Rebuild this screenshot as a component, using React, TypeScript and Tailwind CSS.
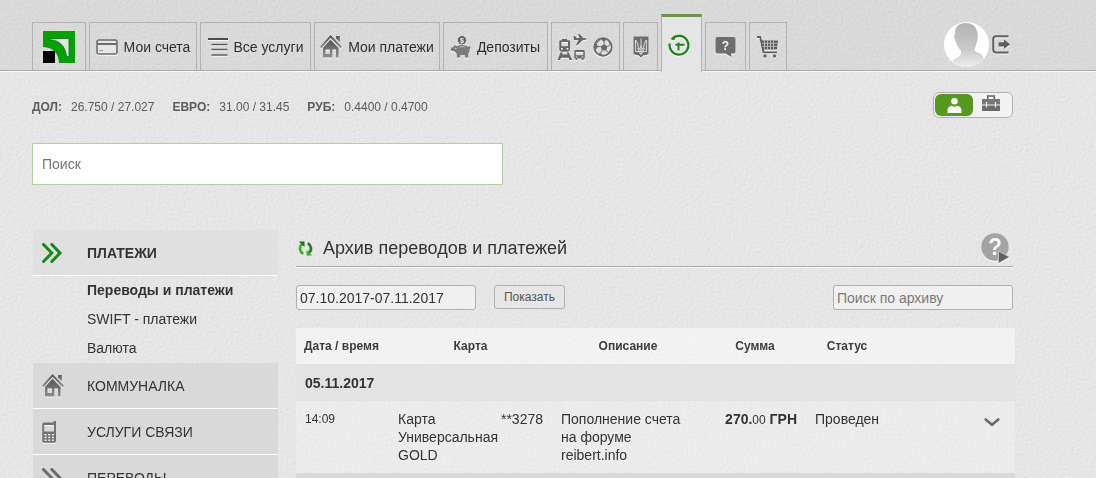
import type { ReactNode } from "react";

type IconProps = { className?: string };

const emboss = "shrink-0 drop-shadow-[0_1px_0_#ffffffcc]";

function PaperTexture({ id, className }: { id: string; className: string }) {
  return (
    <svg aria-hidden="true" className={className}>
      <filter id={id} x="0" y="0" width="100%" height="100%" colorInterpolationFilters="sRGB">
        <feTurbulence type="fractalNoise" baseFrequency="0.4" numOctaves="3" seed="7" result="noise" />
        <feDiffuseLighting in="noise" surfaceScale="0.12" diffuseConstant="1" lightingColor="#ffffff">
          <feDistantLight azimuth="225" elevation="64" />
        </feDiffuseLighting>
      </filter>
      <rect width="100%" height="100%" filter={`url(#${id})`} />
    </svg>
  );
}

function Logo() {
  return (
    <svg width="32" height="32" viewBox="0 0 32 32" aria-hidden="true">
      <path d="M0 0H32V32H16C15.500 22 10 16.500 0 16Z" fill="#08a008" />
      <path d="M7 7.500H26V25.500H23.500C22.500 15.500 17 9.500 7 8.700Z" fill="#e4e4e4" stroke="#067506" strokeWidth="0.800" />
      <rect y="20" width="12" height="12" fill="#000" />
    </svg>
  );
}

function CardIcon() {
  return (
    <svg width="22" height="16" viewBox="0 0 22 16" className={emboss} aria-hidden="true">
      <rect x="1" y="1" width="20" height="14" rx="2" fill="#e6e6e6" stroke="#6c6c6c" strokeWidth="1.600" />
      <path d="M1 5H21" stroke="#6c6c6c" strokeWidth="2" />
      <path d="M3.500 11.500H4.700M5.700 11.500H6.900" stroke="#6c6c6c" />
    </svg>
  );
}

function ListIcon() {
  return (
    <svg width="20" height="18" viewBox="0 0 20 18" className={emboss} aria-hidden="true">
      <path d="M0 1H20" stroke="#4c4c4c" strokeWidth="2" />
      <path d="M3.500 6.500H19.500M3.500 11.500H19.500M3.500 17H19.500" stroke="#5c5c5c" strokeWidth="1.600" />
    </svg>
  );
}

function HouseIcon({ id }: { id: string }) {
  return (
    <svg width="22" height="23" viewBox="0 0 22 23" className={emboss} aria-hidden="true">
      <defs>
        <linearGradient id={id} x1="0" y1="0" x2="0" y2="1">
          <stop offset="0" stopColor="#555" />
          <stop offset="1" stopColor="#8f8f8f" />
        </linearGradient>
      </defs>
      <g fill={`url(#${id})`}>
        <path d="M10.500 0L22 11.800L20.600 13.200L10.500 3L1.400 13.200L0 11.800Z" />
        <path d="M16 1H19.800V7.500L16 3.800Z" />
        <path fillRule="evenodd" d="M10.500 4.800L18.600 13V22.500H16V14.500H12.300V22.500H3V12.800ZM5.500 14.500V19H10V14.500Z" />
      </g>
    </svg>
  );
}

function PiggyIcon() {
  return (
    <svg width="20" height="22" viewBox="0 0 20 22" className={emboss} aria-hidden="true">
      <circle cx="11" cy="4.200" r="4.200" fill="#626262" />
      <text x="11" y="6.800" textAnchor="middle" fill="#f1f1f1" className="font-['Liberation_Sans',sans-serif] text-[7px] font-bold">
        $
      </text>
      <path
        d="M3 9L6 10.200C9 8.300 15 8.500 17.300 11L18.500 10.300C20 11 19.600 12.500 18.600 12.900C18.900 15.500 18 16.900 17.300 17.600V21.500H14V19.200H9.200V21.500H5.800V18.200L4.200 15.800L0 14.600V11.800L2.600 11Z"
        fill="#7b7b7b"
      />
      <path d="M8.500 11.200C10.500 10.400 12.500 10.500 14 11" stroke="#c4c4c4" fill="none" />
      <circle cx="4.800" cy="12.400" r="0.700" fill="#e4e4e4" />
    </svg>
  );
}

function TransportIcon() {
  return (
    <svg width="29" height="26" viewBox="0 0 29 26" className={emboss} aria-hidden="true">
      <g fill="#666">
        <path fillRule="evenodd" d="M4 5H9V6.200H11Q12 6.200 12 7.500V15Q12 17.700 9.500 17.700H4Q1.300 17.700 1.300 15V7.500Q1.300 6.200 2.500 6.200H4ZM3.500 8V12.300H10V8ZM3 14V15.700H4.700V14ZM8.600 14V15.700H10.300V14Z" />
        <path d="M2.500 18.500H5L4 20.500H9.500L8.500 18.500H10.700L14.200 26H11.500L10.600 23.800H3L2 26H-0.400Z" />
        <path d="M15.500 2.300L17 2L18.800 4.200L21.500 4L20 0H21.600L25 4Q28.500 4 28.500 5Q28.500 6 25 5.900L19.300 11.200H17.800L20.600 6.200L16 6Z" />
        <path fillRule="evenodd" d="M17.500 16H25.500Q26.800 16 26.800 17.500V24.600H25.500V26H23.700V24.600H19.300V26H17.500V24.600H16.300V17.500Q16.300 16 17.500 16ZM17.800 18V21.300H25.300V18ZM17.800 22.500V23.500H19.500V22.500ZM23.600 22.500V23.500H25.300V22.500Z" />
      </g>
    </svg>
  );
}

function BallIcon() {
  return (
    <svg width="20" height="20" viewBox="0 0 20 20" className={emboss} aria-hidden="true">
      <circle cx="10" cy="10" r="8.800" fill="#dedede" stroke="#6b6b6b" strokeWidth="1.700" />
      <g fill="#6b6b6b">
        <path d="M11.200 7L14.500 9.600L13.200 13.600H9L7.600 9.600Z" />
        <path d="M7 1.600L11.500 1.300L13.500 3L10.500 4.500Z" />
        <path d="M1.200 8L3.500 6.500L5 9.500L3 12.800L1.300 12Z" />
        <path d="M6.200 15.500L9 17L9.500 19L6 18.200Z" />
        <path d="M15.500 15L18.700 11.500L17.800 15.500L15.500 17.600Z" />
        <path d="M16.500 4.200L18.500 7.500L17.400 7.900L15.600 5.500Z" />
      </g>
      <path d="M11 4L11.200 7.200M14.300 9.600L17.500 7.600M13.200 13.500L15.500 15.500M9 13.500L7.500 16M7.600 9.600H4.500M3.500 6.500L7 2.500" stroke="#6b6b6b" fill="none" />
    </svg>
  );
}

function TridentIcon() {
  return (
    <svg width="16" height="22" viewBox="0 0 16 22" className={emboss} aria-hidden="true">
      <path d="M0.500 0.500H15.500V17.500Q15.500 18.500 14 18.800L10 19.500L8 21.700L6 19.500L2 18.800Q0.500 18.500 0.500 17.500Z" fill="#6d6d6d" />
      <path
        d="M8 2.500V9.500M2.600 4V15.500H13.400V4M2.600 4Q5.300 7 5.300 11Q5.300 12.500 4.500 13H11.500Q10.700 12.500 10.700 11Q10.700 7 13.400 4M8 9.500Q7.500 12.500 5.500 14Q6 16.500 8 18.500Q10 16.500 10.500 14Q8.500 12.500 8 9.500M8 13V18"
        stroke="#e9e9e9"
        strokeWidth="0.900"
        fill="none"
      />
    </svg>
  );
}

function ClockIcon() {
  return (
    <svg width="22" height="22" viewBox="0 0 22 22" className={emboss} fill="none" stroke="#1b8220" strokeWidth="2.200" aria-hidden="true">
      <path d="M4 4.900A9.400 9.400 0 1 1 1.700 9.500" />
      <path d="M3.300 4.900H7" strokeWidth="1.600" />
      <path d="M10.500 8.500V16.500M7.500 10.700H16.500" strokeWidth="2" />
    </svg>
  );
}

function QuestionIcon() {
  return (
    <svg width="21" height="20" viewBox="0 0 21 20" className={emboss} aria-hidden="true">
      <path d="M2.500 0H18.500Q20.500 0 20.500 2V14.500Q20.500 16.500 18.500 16.500H16L16.500 20L10.500 16.500H2.500Q0.500 16.500 0.500 14.500V2Q0.500 0 2.500 0Z" fill="#6e6e6e" />
      <text x="10.500" y="12.500" textAnchor="middle" fill="#f4f4f4" className="font-['Liberation_Sans',sans-serif] text-[12px] font-bold">
        ?
      </text>
    </svg>
  );
}

function CartIcon() {
  return (
    <svg width="22" height="22" viewBox="0 0 22 22" className={emboss} aria-hidden="true">
      <path d="M0 1H3.200L6.500 16.300H20" fill="none" stroke="#5e5e5e" strokeWidth="1.800" />
      <path d="M4 4.500H21L20 13.500H6Z" fill="#5e5e5e" />
      <path d="M7.500 5V13M10.500 5V13M13.500 5V13M16.500 5V13M5 7.300H20.500M5.500 10.300H20" stroke="#d6d6d6" strokeWidth="0.700" />
      <circle cx="8" cy="20" r="1.700" fill="#666" />
      <circle cx="17.500" cy="20" r="1.700" fill="#666" />
    </svg>
  );
}

function Avatar() {
  return (
    <svg width="45" height="45" viewBox="0 0 45 45" aria-hidden="true">
      <defs>
        <clipPath id="avatar-clip">
          <circle cx="22.500" cy="22.500" r="22.500" />
        </clipPath>
        <linearGradient id="avatar-fill" x1="0" y1="0" x2="0" y2="1">
          <stop offset="0" stopColor="#b3b3b3" />
          <stop offset="0.600" stopColor="#cacaca" />
          <stop offset="1" stopColor="#ededed" />
        </linearGradient>
      </defs>
      <g clipPath="url(#avatar-clip)">
        <rect width="45" height="45" fill="#fff" />
        <path
          d="M22 1C14 1 10.800 5 11 12L10 14.500L12.500 22C13.500 25 15.500 27 17 29C17.500 33 15 35 11 36.500C9 37.500 8 40 8 45H41C41 40 40 36 38 33C36 29.500 30 31 30.500 27.500C32 24 33 20 33.500 17C35 12 32.500 8 31.500 5.500C29.500 2.500 26 1 22 1Z"
          fill="url(#avatar-fill)"
        />
      </g>
    </svg>
  );
}

function ExitIcon() {
  return (
    <svg width="18" height="19" viewBox="0 0 18 19" className={emboss} aria-hidden="true">
      <path d="M16.500 1.200H4Q1.200 1.200 1.200 4V14.500Q1.200 17.500 4 17.500H16.500" fill="none" stroke="#606060" strokeWidth="2" />
      <path d="M6.500 7.300H12V4.500L18 9.300L12 14V11.500H6.500Z" fill="#606060" />
    </svg>
  );
}

function PersonIcon() {
  return (
    <svg width="15" height="15" viewBox="0 0 15 15" fill="#fff" aria-hidden="true">
      <circle cx="7.500" cy="3.300" r="3.300" />
      <path d="M0.500 15V12.500Q0.500 8.300 5 7.800L7.500 9L10 7.800Q14.500 8.300 14.500 12.500V15Z" />
    </svg>
  );
}

function BriefcaseIcon() {
  return (
    <svg width="18" height="16" viewBox="0 0 18 16" aria-hidden="true">
      <path d="M5.700 4V1H12.300V4" fill="none" stroke="#626262" strokeWidth="1.500" />
      <path d="M0 4H18V9.500H0Z" fill="#777" />
      <path d="M0 10.500H18V16H0Z" fill="#6c6c6c" />
      <path d="M4.500 7V12.500M13.500 7V12.500" stroke="#eee" strokeWidth="1.200" />
    </svg>
  );
}

function ChevronsIcon({ className }: IconProps) {
  return (
    <svg width="22" height="20" viewBox="0 0 22 20" className={className} fill="none" stroke="currentColor" strokeWidth="3" aria-hidden="true">
      <path d="M1.500 1.500L9.800 10L1.500 18.500M9.800 1.500L18 10L9.800 18.500" strokeLinecap="round" />
    </svg>
  );
}

function PhoneIcon() {
  return (
    <svg width="15" height="22" viewBox="0 0 15 22" className={emboss} aria-hidden="true">
      <path
        fillRule="evenodd"
        d="M2 1.500H11.500V0H14V20Q14 21.700 12.500 21.700H1.700Q0.200 21.700 0.200 20V3.200Q0.200 1.500 2 1.500ZM2.200 4V10.500H12V4ZM2.500 13V14.500H4.500V13ZM6.200 13V14.500H8.200V13ZM9.900 13V14.500H11.900V13ZM2.500 15.700V17.200H4.500V15.700ZM6.200 15.700V17.200H8.200V15.700ZM9.900 15.700V17.200H11.900V15.700ZM2.500 18.400V19.900H4.500V18.400ZM6.200 18.400V19.900H8.200V18.400ZM9.900 18.400V19.900H11.900V18.400Z"
        fill="#727272"
      />
    </svg>
  );
}

function RefreshIcon() {
  return (
    <svg width="15" height="15" viewBox="0 0 15 15" aria-hidden="true">
      <path d="M4.500 3Q1.500 5 2 8.200Q2.400 11 5.200 12.800" fill="none" stroke="#3fae2c" strokeWidth="2.600" />
      <path d="M0.800 0.600L6.500 0.400V6Z" fill="#1d6b1b" />
      <path d="M10.500 12Q13.500 10 13 6.800Q12.600 4 9.800 2.200" fill="none" stroke="#237a1e" strokeWidth="2.600" />
      <path d="M14.200 14.400L8.500 14.600V9Z" fill="#3fae2c" />
    </svg>
  );
}

function HelpIcon() {
  return (
    <svg width="29" height="31" viewBox="0 0 29 31" className={emboss} aria-hidden="true">
      <circle cx="14" cy="14" r="13.700" fill="#a4a4a4" />
      <text x="14" y="21.500" textAnchor="middle" fill="#f6f6f6" className="font-['Liberation_Sans',sans-serif] text-[23px] font-bold">
        ?
      </text>
      <path d="M17.500 18L28.500 24L17.500 30.300Z" fill="#616161" stroke="#d8d8d8" strokeWidth="0.700" />
    </svg>
  );
}

function ChevronDown() {
  return (
    <svg width="16" height="9" viewBox="0 0 16 9" aria-hidden="true">
      <path d="M1.700 1.500L8 6.700L14.300 1.500" fill="none" stroke="#6b6b6b" strokeWidth="2.700" strokeLinecap="round" />
    </svg>
  );
}

const tabs: { label: string; text?: string; width: string; icon: ReactNode }[] = [
  { label: "Главная", width: "w-[54px]", icon: <Logo /> },
  { label: "Мои счета", text: "Мои счета", width: "w-[108px]", icon: <CardIcon /> },
  { label: "Все услуги", text: "Все услуги", width: "w-[111px]", icon: <ListIcon /> },
  { label: "Мои платежи", text: "Мои платежи", width: "w-[126px]", icon: <HouseIcon id="house-top" /> },
  { label: "Депозиты", text: "Депозиты", width: "w-[105px]", icon: <PiggyIcon /> },
  {
    label: "Билеты",
    width: "w-[69px]",
    icon: (
      <>
        <TransportIcon />
        <BallIcon />
      </>
    ),
  },
  { label: "Госуслуги", width: "w-[35px]", icon: <TridentIcon /> },
  { label: "Архив", width: "w-[41px]", icon: <ClockIcon /> },
  { label: "Помощь", width: "w-[41px]", icon: <QuestionIcon /> },
  { label: "Корзина", width: "w-[38px]", icon: <CartIcon /> },
];

const rates = [
  ["ДОЛ:", "26.750 / 27.027"],
  ["ЕВРО:", "31.00 / 31.45"],
  ["РУБ:", "0.4400 / 0.4700"],
];

function Header() {
  return (
    <header className="border-b border-[#a9a9a9] bg-black/5 shadow-[0_1px_0_#f8f8f8]">
      <div className="ml-8 flex h-[70px] max-w-[981px] items-end">
        <nav className="flex items-end gap-[3px]">
          {tabs.map((tab) =>
            tab.label === "Архив" ? (
              <a
                key={tab.label}
                href="#archive"
                aria-label={tab.label}
                aria-current="page"
                className={`-mb-0.5 flex h-[58px] shrink-0 items-center justify-center border-x border-t-[3px] border-x-[#b3b3b3] border-t-[#669a3a] bg-[#e5e5e5] pr-[5px] ${tab.width}`}
              >
                {tab.icon}
              </a>
            ) : (
              <a
                key={tab.label}
                href="#tab"
                aria-label={tab.label}
                className={`flex h-12 shrink-0 items-center justify-center gap-[6px] border-x border-t border-[#b3b3b3] text-sm text-[#2e2e2e] ${tab.width}`}
              >
                {tab.icon}
                {tab.text && <span className="whitespace-nowrap">{tab.text}</span>}
              </a>
            ),
          )}
        </nav>
        <div className="mb-[3px] ml-auto flex items-center gap-[3px] pr-[3px]">
          <a href="#profile" aria-label="Профиль">
            <Avatar />
          </a>
          <button type="button" aria-label="Выход">
            <ExitIcon />
          </button>
        </div>
      </div>
    </header>
  );
}

function SideItem({ icon, title, active }: { icon: ReactNode; title: string; active?: boolean }) {
  return (
    <a
      href="#section"
      className={`flex h-[46px] items-center border-b border-white text-sm text-[#333] ${active ? "bg-[#e0e0e0] font-bold" : "bg-[#d9d9d9]"}`}
    >
      <span className="flex w-[54px] shrink-0 pl-[9px]">{icon}</span>
      {title}
    </a>
  );
}

function Sidebar() {
  return (
    <aside className="w-[245px] shrink-0">
      <SideItem icon={<ChevronsIcon className="text-[#128a18]" />} title="ПЛАТЕЖИ" active />
      <ul className="pl-[54px] text-sm leading-[29px] text-[#333]">
        <li>
          <a href="#transfers" className="font-bold">
            Переводы и платежи
          </a>
        </li>
        <li>
          <a href="#swift">SWIFT - платежи</a>
        </li>
        <li>
          <a href="#currency">Валюта</a>
        </li>
      </ul>
      <SideItem icon={<HouseIcon id="house-side" />} title="КОММУНАЛКА" />
      <SideItem icon={<PhoneIcon />} title="УСЛУГИ СВЯЗИ" />
      <SideItem icon={<ChevronsIcon className="text-[#6b6b6b]" />} title="ПЕРЕВОДЫ" />
    </aside>
  );
}

function PaymentsTable() {
  return (
    <table className="mt-[18px] w-full table-fixed border-collapse text-sm leading-[18px] text-[#333]">
      <colgroup>
        <col className="w-[93px]" />
        <col className="w-[163px]" />
        <col className="w-[152px]" />
        <col className="w-[102px]" />
        <col className="w-[82px]" />
        <col />
      </colgroup>
      <thead>
        <tr className="h-9 bg-white/50 text-xs text-[#3c3c3c]">
          <th className="whitespace-nowrap pl-2 text-left">Дата / время</th>
          <th>Карта</th>
          <th>Описание</th>
          <th>Сумма</th>
          <th>Статус</th>
          <td></td>
        </tr>
      </thead>
      <tbody>
        <tr className="h-[37px] bg-[#e3e3e3]">
          <th colSpan={6} className="pl-[9px] text-left">
            05.11.2017
          </th>
        </tr>
        <tr className="h-[75px] border-b-[6px] border-[#d9d9d9] bg-white/25 align-top">
          <td className="pl-[9px] pt-[9px] text-xs leading-[18px]">14:09</td>
          <td className="px-[9px] pt-[9px]">
            <div className="flex justify-between">
              <span>
                Карта
                <br />
                Универсальная
                <br />
                GOLD
              </span>
              <span className="-ml-4">**3278</span>
            </div>
          </td>
          <td className="pl-[9px] pt-[9px]">
            Пополнение счета
            <br />
            на форуме
            <br />
            reibert.info
          </td>
          <td className="whitespace-nowrap pr-[9px] pt-[9px] text-right font-bold">
            270.<span className="text-xs font-normal">00</span> ГРН
          </td>
          <td className="pl-[9px] pt-[9px]">Проведен</td>
          <td className="pr-[15px] pt-[17px] text-right">
            <button type="button" aria-label="Подробнее" className="ml-auto block">
              <ChevronDown />
            </button>
          </td>
        </tr>
      </tbody>
    </table>
  );
}

export default function App() {
  return (
    <div className="relative isolate h-screen overflow-y-auto bg-[#e5e5e5] font-['Liberation_Sans',Arial,sans-serif] [scrollbar-width:none]">
      <PaperTexture id="paper" className="pointer-events-none fixed inset-0 -z-10 size-full" />
      <Header />
      <div className="ml-8 max-w-[983px]">
        <div className="flex items-start justify-between pr-0.5 pt-[21px]">
          <dl className="flex gap-[18px] pt-[7px] text-xs leading-4 text-[#5c5c5c]">
            {rates.map(([name, value]) => (
              <div key={name} className="flex gap-[9px]">
                <dt className="font-bold">{name}</dt>
                <dd>{value}</dd>
              </div>
            ))}
          </dl>
          <div className="flex h-[26px] w-20 rounded-md border border-[#b0b0b0] bg-[#f2f2f2] p-px">
            <button type="button" aria-label="Частное лицо" aria-pressed="true" className="flex w-[38px] items-center justify-center rounded-md bg-[#57981f]">
              <PersonIcon />
            </button>
            <button type="button" aria-label="Бизнес" className="flex w-9 items-center justify-center pb-1">
              <BriefcaseIcon />
            </button>
          </div>
        </div>
        <input
          type="search"
          aria-label="Поиск"
          placeholder="Поиск"
          className="mt-[25px] block h-[42px] w-full max-w-[471px] border border-[#b5d09f] bg-white px-[9px] text-sm text-[#333] placeholder:text-[#757575]"
        />
        <div className="mt-[45px] flex gap-[18px] pl-px">
          <Sidebar />
          <main className="min-w-0 grow">
            <div className="mr-0.5 flex h-[37px] items-center border-b border-[#a9a9a9] shadow-[0_1px_0_#f8f8f8]">
              <button type="button" aria-label="Обновить" className="mr-[10px] pl-[2px]">
                <RefreshIcon />
              </button>
              <h1 className="text-lg text-[#333]">Архив переводов и платежей</h1>
              <button type="button" aria-label="Справка" className="ml-auto mr-[3px]">
                <HelpIcon />
              </button>
            </div>
            <form className="mr-0.5 mt-[18px] flex items-start" onSubmit={(e) => e.preventDefault()}>
              <input
                type="text"
                aria-label="Период"
                defaultValue="07.10.2017-07.11.2017"
                className="h-[25px] w-[180px] rounded-[3px] border border-[#aeaeae] bg-[#f0f0f0] px-[3px] text-sm text-[#333]"
              />
              <button type="submit" className="ml-[18px] h-6 w-[71px] rounded-[3px] border border-[#b0b0b0] bg-[#e6e6e6] text-xs text-[#555]">
                Показать
              </button>
              <input
                type="text"
                aria-label="Поиск по архиву"
                placeholder="Поиск по архиву"
                className="ml-auto h-[25px] w-[180px] rounded-[3px] border border-[#aeaeae] bg-[#f0f0f0] px-[3px] text-sm text-[#333] placeholder:text-[#7a7a7a]"
              />
            </form>
            <PaymentsTable />
          </main>
        </div>
      </div>
    </div>
  );
}
